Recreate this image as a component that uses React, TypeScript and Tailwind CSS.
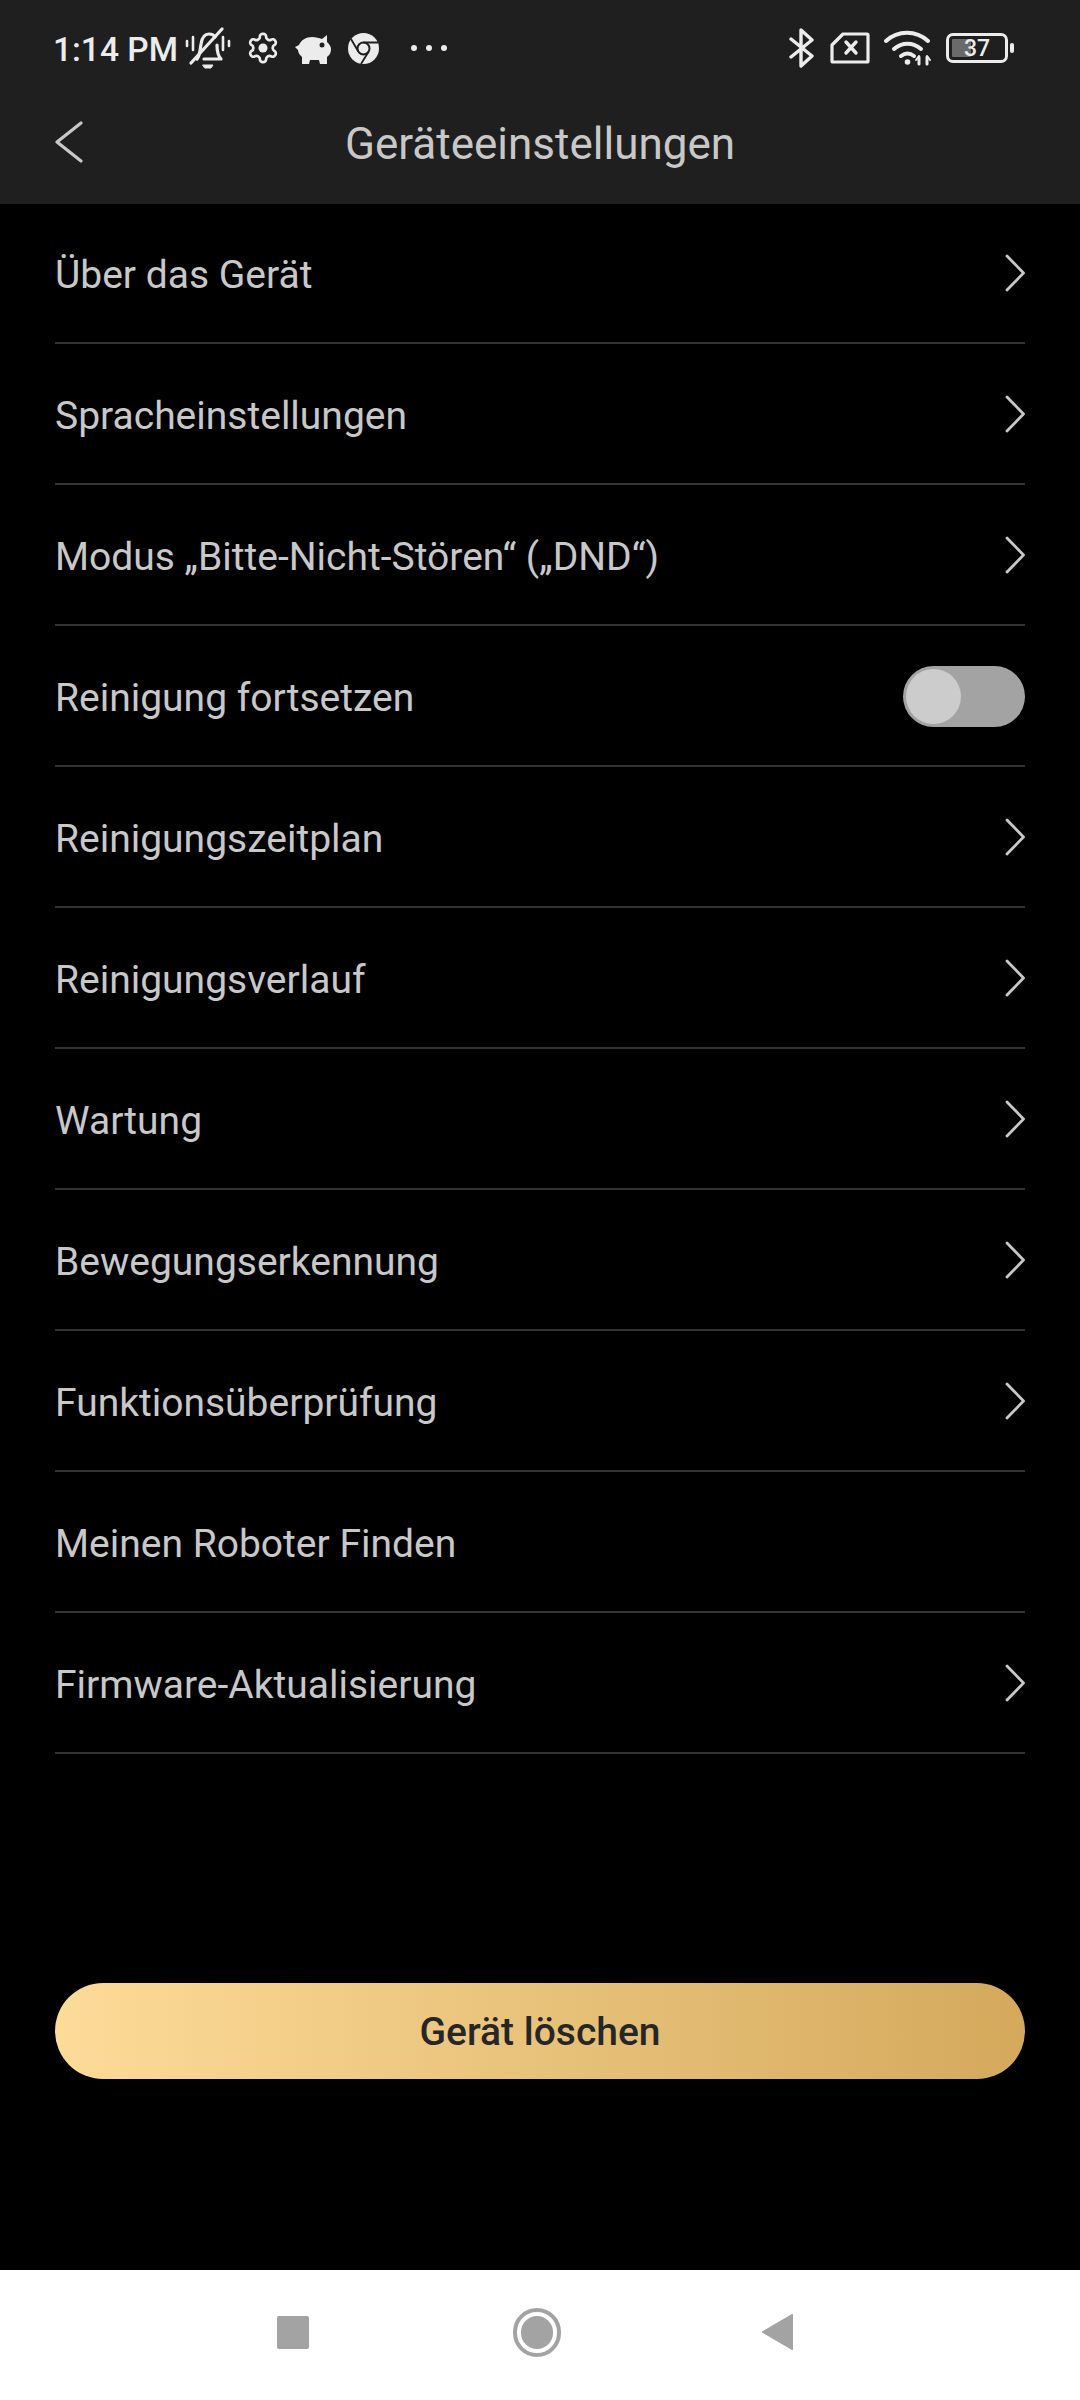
const rows = [
  { label: 'Über das Gerät', arrow: true },
  { label: 'Spracheinstellungen', arrow: true },
  { label: 'Modus „Bitte-Nicht-Stören“ („DND“)', arrow: true },
  { label: 'Reinigung fortsetzen', toggle: true },
  { label: 'Reinigungszeitplan', arrow: true },
  { label: 'Reinigungsverlauf', arrow: true },
  { label: 'Wartung', arrow: true },
  { label: 'Bewegungserkennung', arrow: true },
  { label: 'Funktionsüberprüfung', arrow: true },
  { label: 'Meinen Roboter Finden' },
  { label: 'Firmware-Aktualisierung', arrow: true },
]

const BellOff = () => (
  <svg width="46" height="42" viewBox="0 0 46 42" fill="none" stroke="#ececec" strokeWidth="3.2" strokeLinecap="round" strokeLinejoin="round">
    <path d="M2 14v5M8 10v13M38 10v13M44 14v5" strokeWidth="2.6" />
    <path d="M12 32c3-3 3-9 4-15 1-7 4-10 8-10 3 0 5 1 6 3M32 18c0 6 1 11 4 14H19" />
    <path d="M6 36 37 2" />
    <path d="M18 38h10l-2 3h-6z" fill="#ececec" strokeWidth="1" />
  </svg>
)

const Gear = () => (
  <svg width="34" height="34" viewBox="0 0 24 24" fill="none" stroke="#ececec" strokeWidth="1.9" strokeLinecap="round" strokeLinejoin="round">
    <path d="M12.22 2h-.44a2 2 0 0 0-2 2v.18a2 2 0 0 1-1 1.73l-.43.25a2 2 0 0 1-2 0l-.15-.08a2 2 0 0 0-2.73.73l-.22.38a2 2 0 0 0 .73 2.73l.15.1a2 2 0 0 1 1 1.72v.51a2 2 0 0 1-1 1.74l-.15.09a2 2 0 0 0-.73 2.73l.22.38a2 2 0 0 0 2.73.73l.15-.08a2 2 0 0 1 2 0l.43.25a2 2 0 0 1 1 1.73V20a2 2 0 0 0 2 2h.44a2 2 0 0 0 2-2v-.18a2 2 0 0 1 1-1.73l.43-.25a2 2 0 0 1 2 0l.15.08a2 2 0 0 0 2.73-.73l.22-.39a2 2 0 0 0-.73-2.73l-.15-.08a2 2 0 0 1-1-1.74v-.5a2 2 0 0 1 1-1.74l.15-.09a2 2 0 0 0 .73-2.73l-.22-.38a2 2 0 0 0-2.73-.73l-.15.08a2 2 0 0 1-2 0l-.43-.25a2 2 0 0 1-1-1.73V4a2 2 0 0 0-2-2z" />
    <circle cx="12" cy="12" r="3.2" fill="#ececec" stroke="none" />
  </svg>
)

const Pig = () => (
  <svg width="38" height="32" viewBox="0 0 38 32">
    <path
      fill="#ececec"
      d="M0 15l4-2c2-5 7-8 13-8 4 0 7 1 10 2l5-4v7c2 2 4 4 4 7s-1 6-4 8v7h-7l-1-4h-9l-1 4H7v-7c-2-2-4-4-4-7z"
    />
    <circle cx="27" cy="13" r="2.5" fill="#1f1f1f" />
  </svg>
)

const Chrome = () => (
  <svg width="31" height="31" viewBox="0 0 31 31">
    <circle cx="15.5" cy="15.5" r="15.5" fill="#ececec" />
    <circle cx="15.5" cy="15.5" r="6" fill="#ececec" stroke="#1f1f1f" strokeWidth="2" />
    <path d="M15.5 9.5H30M10.3 18.5 3 6M20.7 18.5 13 31" stroke="#1f1f1f" strokeWidth="1.8" fill="none" />
  </svg>
)

const Bluetooth = () => (
  <svg width="26" height="40" viewBox="0 0 26 40" fill="none" stroke="#ececec" strokeWidth="3.4" strokeLinecap="round" strokeLinejoin="round">
    <path d="M2 11l21 17-11 10V2l11 10L2 29" />
  </svg>
)

const SimOff = () => (
  <svg width="40" height="32" viewBox="0 0 40 32" fill="none" stroke="#ececec" strokeLinecap="round" strokeLinejoin="round">
    <path d="M13 2h24a1 1 0 0 1 1 1v26a1 1 0 0 1-1 1H3a1 1 0 0 1-1-1V13z" strokeWidth="3.2" />
    <path d="M16 10l10 11M26 10 16 21" strokeWidth="3.4" />
  </svg>
)

const Wifi = () => (
  <svg width="48" height="36" viewBox="0 0 48 36" fill="none" stroke="#ececec" strokeLinecap="round">
    <path d="M2 11c12-11 30-11 42 0" strokeWidth="4" />
    <path d="M10 19c8-7 19-7 27 0" strokeWidth="4" />
    <path d="M17 26c4-3 9-3 13 0" strokeWidth="4" />
    <circle cx="23.5" cy="32" r="2.8" fill="#ececec" stroke="none" />
    <path d="M35 27v7M43 27v7" strokeWidth="3" />
    <path d="M32 30l3-4M46 30l-3-4" strokeWidth="2" />
  </svg>
)

const Battery = () => (
  <div className="flex items-center gap-[2px]">
    <div className="relative flex h-[30px] w-[62px] items-center rounded-[7px] border-[3px] border-[#ececec] p-[3px]">
      <div className="h-full w-[37%] rounded-[1px] bg-[#6a6a6a]" />
      <span className="absolute inset-0 flex items-center justify-center text-[23px] leading-none font-medium text-[#ececec]">
        37
      </span>
    </div>
    <div className="h-[10px] w-[4px] rounded-full bg-[#ececec]" />
  </div>
)

const Toggle = () => (
  <div className="mt-[2px] flex h-[61px] w-[122px] items-center rounded-full bg-[#a3a3a3] pl-[3px]">
    <div className="h-[55px] w-[55px] rounded-full bg-[#cccccc]" />
  </div>
)

const Arrow = () => (
  <svg width="20" height="38" viewBox="0 0 20 38" fill="none" stroke="#c8c8c8" strokeWidth="2.8" strokeLinecap="round" strokeLinejoin="round">
    <path d="M2 2l16.5 17L2 36" />
  </svg>
)

const Back = () => (
  <svg width="28" height="42" viewBox="0 0 28 42" fill="none" stroke="#c8c8c8" strokeWidth="3.2" strokeLinecap="round" strokeLinejoin="round">
    <path d="M26 2 2 21l24 19" />
  </svg>
)

export default function App() {
  return (
    <div className="flex h-[2400px] w-[1080px] flex-col bg-black font-['Roboto',sans-serif]">
      <header className="h-[204px] shrink-0 bg-[#1f1f1f]">
        <div className="flex h-[96px] items-center justify-between pr-[66px] pl-[53px]">
          <div className="flex items-center">
            <span className="pt-[3px] text-[33.5px] leading-none font-medium text-[#ececec]">1:14 PM</span>
            <div className="ml-[7px] flex items-center">
              <BellOff />
              <div className="ml-[15px]">
                <Gear />
              </div>
              <div className="ml-[15px]">
                <Pig />
              </div>
              <div className="ml-[15px]">
                <Chrome />
              </div>
              <div className="ml-[32px] flex gap-[9px]">
                <span className="h-[6px] w-[6px] rounded-full bg-[#ececec]" />
                <span className="h-[6px] w-[6px] rounded-full bg-[#ececec]" />
                <span className="h-[6px] w-[6px] rounded-full bg-[#ececec]" />
              </div>
            </div>
          </div>
          <div className="flex items-center">
            <Bluetooth />
            <div className="ml-[15px]">
              <SimOff />
            </div>
            <div className="ml-[14px]">
              <Wifi />
            </div>
            <div className="ml-[14px]">
              <Battery />
            </div>
          </div>
        </div>
        <div className="relative flex h-[96px] items-center justify-center">
          <div className="absolute top-[25px] left-[55px] flex">
            <Back />
          </div>
          <h1 className="text-[44px] leading-none font-normal text-[#c8c8c8]">Geräteeinstellungen</h1>
        </div>
      </header>

      <main className="flex-1 px-[55px]">
        {rows.map((row) => (
          <div
            key={row.label}
            className="flex h-[141px] items-center justify-between border-b-2 border-[#333333] first:h-[140px]"
          >
            <span className="pt-[5px] text-[39px] leading-none text-[#c8c8c8]">{row.label}</span>
            {row.arrow && <Arrow />}
            {row.toggle && <Toggle />}
          </div>
        ))}
        <button className="mt-[229px] flex h-[96px] w-full items-center justify-center rounded-full bg-gradient-to-r from-[#fddb98] to-[#d4a95c] pt-[3px] text-[39px] font-medium text-[#262626]">
          Gerät löschen
        </button>
      </main>

      <nav className="flex h-[130px] shrink-0 items-center bg-white pb-[6px]">
        <div className="ml-[277px] h-[33px] w-[32px] rounded-[2px] bg-[#a3a3a3]" />
        <div className="ml-[204px] flex h-[49px] w-[48px] items-center justify-center rounded-full border-[4px] border-[#a3a3a3]">
          <div className="h-[33px] w-[32px] rounded-full bg-[#a3a3a3]" />
        </div>
        <svg className="ml-[200px]" width="33" height="38" viewBox="0 0 33 38">
          <path d="M31 2 2 19l29 17z" fill="#a3a3a3" stroke="#a3a3a3" strokeWidth="2" strokeLinejoin="round" />
        </svg>
      </nav>
    </div>
  )
}
